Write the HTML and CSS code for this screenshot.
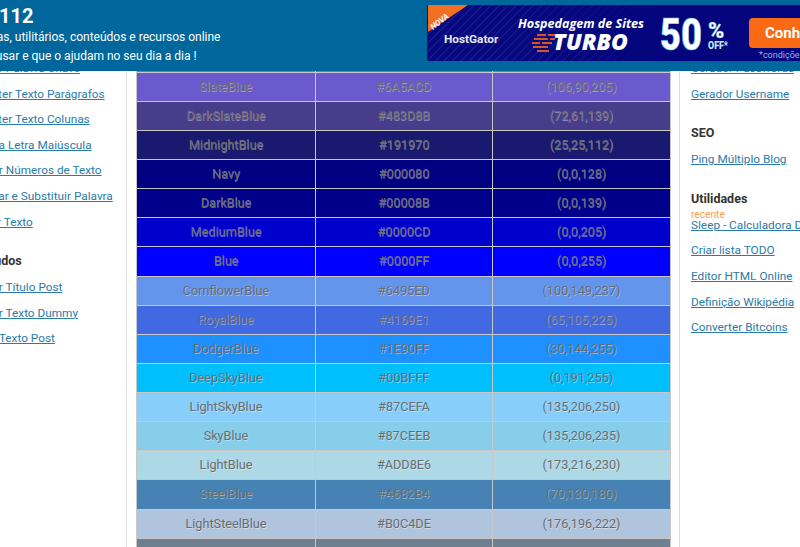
FILE: index.html
```html
<!DOCTYPE html>
<html lang="pt">
  <head>
    <meta charset="UTF-8" />
    <title>Tabela de Cores</title>
    <link rel="stylesheet" href="styles.css">
  </head>
  <body>
    <header class="topbar">
      <div class="brand">
        <div class="brand-title">112</div>
        <p>Ferramentas, utilitários, conteúdos e recursos online</p>
        <p>Fáceis de usar e que o ajudam no seu dia a dia !</p>
      </div>
      <svg class="banner" width="453" height="56" viewBox="0 0 453 56">
        <defs>
          <pattern id="stripes" width="12" height="12" patternUnits="userSpaceOnUse" patternTransform="rotate(-45)">
            <rect width="12" height="12" fill="#07077f"/>
            <rect width="12" height="1" y="3" fill="#182690"/>
            <rect width="12" height="1" y="9" fill="#182690"/>
          </pattern>
          <linearGradient id="fade" x1="0" x2="1">
            <stop offset="0" stop-color="#04047c" stop-opacity="0"/>
            <stop offset="1" stop-color="#04047c"/>
          </linearGradient>
        </defs>
        <rect width="453" height="56" fill="#04047c"/>
        <rect width="230" height="56" fill="url(#stripes)"/>
        <rect x="70" width="160" height="56" fill="url(#fade)"/>
        <polygon points="1,0 41,0 1,27" fill="#f36f21"/>
        <text x="6" y="25" class="b-nova" transform="rotate(-38 6 25)">NOVA</text>
        <text x="17" y="38" class="b-host">HostGator</text>
        <text x="91" y="23" class="b-head" textLength="126" lengthAdjust="spacingAndGlyphs">Hospedagem de Sites</text>
        <g fill="#d9541e">
          <rect x="110" y="29" width="9" height="2"/>
          <rect x="121" y="29" width="8" height="2"/>
          <rect x="107" y="33" width="14" height="2"/>
          <rect x="123" y="33" width="5" height="2"/>
          <rect x="105" y="37" width="8" height="2"/>
          <rect x="115" y="37" width="10" height="2"/>
          <rect x="106" y="41" width="15" height="2"/>
          <rect x="110" y="45" width="12" height="2"/>
        </g>
        <text x="126" y="45" class="b-turbo" textLength="75" lengthAdjust="spacingAndGlyphs">TURBO</text>
        <text x="233" y="45" class="b-fifty" textLength="42" lengthAdjust="spacingAndGlyphs">50</text>
        <text x="281" y="33" class="b-percent">%</text>
        <text x="281" y="44" class="b-off" textLength="20" lengthAdjust="spacingAndGlyphs">OFF*</text>
        <rect x="322" y="13" width="90" height="30" rx="4" fill="#fa6a14"/>
        <text x="338" y="33" class="b-cta">Conheça</text>
        <text x="332" y="53" class="b-small">*condições</text>
      </svg>
    </header>

    <div class="page">
      <aside class="side side-left">
        <h3>Texto</h3>
        <ul>
          <li><a href="#">Gerador Palavra Chave</a></li>
          <li><a href="#">Converter Texto Parágrafos</a></li>
          <li><a href="#">Converter Texto Colunas</a></li>
          <li><a href="#">Primeira Letra Maiúscula</a></li>
          <li><a href="#">Ordenar Números de Texto</a></li>
          <li><a href="#">Localizar e Substituir Palavra</a></li>
          <li><a href="#">Inverter Texto</a></li>
        </ul>
        <h3>Conteúdos</h3>
        <ul>
          <li><a href="#">Gerador Título Post</a></li>
          <li><a href="#">Gerador Texto Dummy</a></li>
          <li><a href="#">Contar Texto Post</a></li>
        </ul>
      </aside>

      <main class="content">
        <table class="colors">
          <tr style="background: #7b68ee"><td>MediumSlateBlue</td><td>#7B68EE</td><td>(123,104,238)</td></tr>
          <tr style="background: #6a5acd"><td>SlateBlue</td><td>#6A5ACD</td><td>(106,90,205)</td></tr>
          <tr style="background: #483d8b"><td>DarkSlateBlue</td><td>#483D8B</td><td>(72,61,139)</td></tr>
          <tr style="background: #191970"><td>MidnightBlue</td><td>#191970</td><td>(25,25,112)</td></tr>
          <tr style="background: #000080"><td>Navy</td><td>#000080</td><td>(0,0,128)</td></tr>
          <tr style="background: #00008b"><td>DarkBlue</td><td>#00008B</td><td>(0,0,139)</td></tr>
          <tr style="background: #0000cd"><td>MediumBlue</td><td>#0000CD</td><td>(0,0,205)</td></tr>
          <tr style="background: #0000ff"><td>Blue</td><td>#0000FF</td><td>(0,0,255)</td></tr>
          <tr style="background: #6495ed"><td>CornflowerBlue</td><td>#6495ED</td><td>(100,149,237)</td></tr>
          <tr style="background: #4169e1"><td>RoyalBlue</td><td>#4169E1</td><td>(65,105,225)</td></tr>
          <tr style="background: #1e90ff"><td>DodgerBlue</td><td>#1E90FF</td><td>(30,144,255)</td></tr>
          <tr style="background: #00bfff"><td>DeepSkyBlue</td><td>#00BFFF</td><td>(0,191,255)</td></tr>
          <tr style="background: #87cefa"><td>LightSkyBlue</td><td>#87CEFA</td><td>(135,206,250)</td></tr>
          <tr style="background: #87ceeb"><td>SkyBlue</td><td>#87CEEB</td><td>(135,206,235)</td></tr>
          <tr style="background: #add8e6"><td>LightBlue</td><td>#ADD8E6</td><td>(173,216,230)</td></tr>
          <tr style="background: #4682b4"><td>SteelBlue</td><td>#4682B4</td><td>(70,130,180)</td></tr>
          <tr style="background: #b0c4de"><td>LightSteelBlue</td><td>#B0C4DE</td><td>(176,196,222)</td></tr>
          <tr style="background: #708090"><td></td><td></td><td></td></tr>
        </table>
      </main>

      <aside class="side side-right">
        <h3>Geradores</h3>
        <ul>
          <li><a href="#">Gerador Passwords</a></li>
          <li><a href="#">Gerador Username</a></li>
        </ul>
        <h3>SEO</h3>
        <ul>
          <li><a href="#">Ping Múltiplo Blog</a></li>
        </ul>
        <h3>Utilidades</h3>
        <ul>
          <li class="is-new"><span class="tag">recente</span><a href="#">Sleep - Calculadora Dormir</a></li>
          <li><a href="#">Criar lista TODO</a></li>
          <li><a href="#">Editor HTML Online</a></li>
          <li><a href="#">Definição Wikipédia</a></li>
          <li><a href="#">Converter Bitcoins</a></li>
        </ul>
      </aside>
    </div>
  </body>
</html>
```

FILE: styles.css
```css
html,
body {
  height: 100%;
}

body {
  margin: 0;
  overflow: hidden;
  font-family: Roboto, Arial, sans-serif;
  font-size: 11.8px;
  color: #333;
  background: #fff;
}

.topbar {
  position: fixed;
  top: 0;
  left: 0;
  width: 100%;
  height: 71px;
  display: flex;
  background: #00679c;
  color: #fff;
  overflow: hidden;
  z-index: 10;
}

.brand {
  flex: 0 0 485px;
  margin-left: -58px;
}

.brand-title {
  margin: 4px 0 0 57px;
  font-size: 20px;
  font-weight: 700;
  line-height: 24px;
}

.brand p {
  margin: 0;
  font-size: 12px;
  line-height: 19px;
}

.banner {
  flex: 0 0 453px;
  margin-top: 5px;
}

.b-nova {
  font: italic 700 8px Roboto, sans-serif;
  fill: #fff;
}

.b-host {
  font: 700 11.8px Roboto, sans-serif;
  fill: #e6e8f5;
}

.b-head {
  font: italic 700 12px "Open Sans", sans-serif;
  fill: #fff;
}

.b-turbo {
  font: italic 800 22px "Open Sans", sans-serif;
  fill: #fff;
}

.b-fifty {
  font: 900 44px Roboto, sans-serif;
  fill: #fff;
  stroke: #5ec8e8;
  stroke-width: 0.6px;
}

.b-percent {
  font: 900 22px Roboto, sans-serif;
  fill: #fff;
  stroke: #5ec8e8;
  stroke-width: 0.4px;
}

.b-off {
  font: 900 11px Roboto, sans-serif;
  fill: #bfeaf5;
}

.b-cta {
  font: 700 15px Roboto, sans-serif;
  fill: #fff;
}

.b-small {
  font: 9px Roboto, sans-serif;
  fill: #8fb4e8;
}

.page {
  display: flex;
  margin-left: -39px;
}

.side {
  padding-top: 28px;
}

.side-left {
  flex: 0 0 165px;
}

.side-right {
  flex: 0 0 160px;
  margin-left: 11px;
}

.side h3 {
  margin: 12px 0 0;
  font-size: 12.5px;
  font-weight: 700;
  line-height: 28px;
  color: #333;
}

.side h3:first-child {
  margin-top: 0;
}

.side ul {
  margin: 0;
  padding: 0;
  list-style: none;
}

.side li {
  line-height: 25.6px;
  white-space: nowrap;
}

.side a {
  color: #2a7ba8;
}

.is-new {
  position: relative;
}

.tag {
  position: absolute;
  top: -4px;
  left: 0;
  font-size: 10.2px;
  line-height: 12px;
  color: #f9a04b;
}

.content {
  flex: 0 0 535px;
  padding: 42.5px 8px 0 9px;
  border-left: 1px solid #ddd;
  border-right: 1px solid #ddd;
}

.colors {
  width: 535px;
  border-collapse: collapse;
  table-layout: fixed;
}

.colors td {
  box-sizing: border-box;
  padding: 6px 8px;
  height: 29.13px;
  line-height: 16.13px;
  border: 1px solid #c8c8c8;
  text-align: center;
  color: #6c6c6c;
  font-size: 12.7px;
  text-shadow: 0.5px 0.5px 0.5px rgba(255, 255, 255, 0.4);
}

.colors td:nth-child(1) {
  width: 179px;
}

.colors td:nth-child(2) {
  width: 177px;
}
```
